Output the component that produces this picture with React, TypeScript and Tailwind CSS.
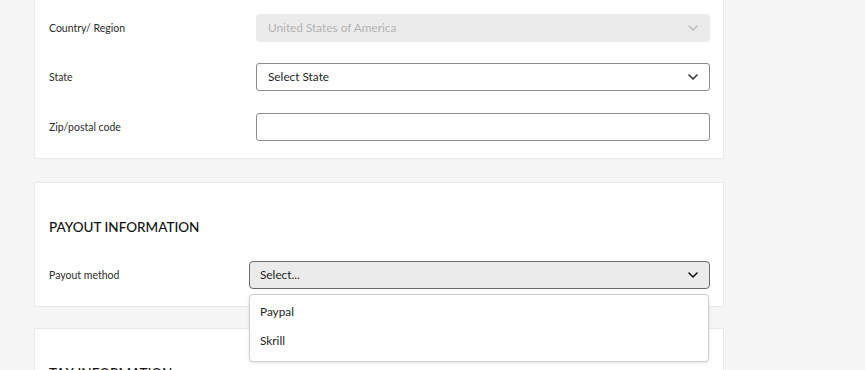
import { ReactNode } from "react";

const Chevron = ({ className }: { className: string }) => (
  <svg width="10" height="6" viewBox="0 0 10 6" className={className} fill="none">
    <path d="M1 1l4 4 4-4" stroke="currentColor" strokeWidth="1.6" strokeLinecap="round" strokeLinejoin="round" />
  </svg>
);

const Row = ({ label, labelW, children, className }: { label: string; labelW: string; children: ReactNode; className?: string }) => (
  <div className={`flex items-center h-[28px] ${className ?? ""}`}>
    <div className={`${labelW} shrink-0 pt-[1px] text-[10.5px] text-[#2c2c2c]`}>{label}</div>
    {children}
  </div>
);

const App = () => {
  return (
    <div className="min-h-[370px] h-[370px] overflow-hidden bg-[#f5f5f5] pl-[34px] font-['Lato','Liberation_Sans',sans-serif]">
      {/* address card */}
      <div className="w-[690px] bg-white border border-t-0 border-[#e9e9e9] pt-[14px] pb-[17px] pl-[14px] pr-[13px]">
        <Row label="Country/ Region" labelW="w-[207px]">
          <div className="flex-1 h-[28px] rounded-[4px] bg-[#ebebeb] flex items-center justify-between pl-[12px] pr-[12px] text-[11.8px] text-[#b3b3b3]">
            <span>United States of America</span>
            <Chevron className="text-[#bdbdbd]" />
          </div>
        </Row>
        <Row label="State" labelW="w-[207px]" className="mt-[21px]">
          <div className="flex-1 h-[28px] rounded-[3px] border border-[#8c8c8c] flex items-center justify-between pl-[11px] pr-[11px] text-[11.8px] text-[#1f1f1f]">
            <span>Select State</span>
            <Chevron className="text-[#333]" />
          </div>
        </Row>
        <Row label="Zip/postal code" labelW="w-[207px]" className="mt-[22px]">
          <div className="flex-1 h-[28px] rounded-[3px] border border-[#8c8c8c]" />
        </Row>
      </div>

      {/* payout card */}
      <div className="relative z-10 mt-[23px] w-[690px] bg-white border border-[#e9e9e9] pt-[37px] pb-[17px] pl-[14px] pr-[13px]">
        <h2 className="text-[13.5px] leading-[14px] font-medium text-[#111] uppercase">Payout information</h2>
        <Row label="Payout method" labelW="w-[200px]" className="mt-[27px]">
          <div className="relative flex-1">
            <div className="h-[28px] rounded-[4px] border border-[#6b6b6b] bg-[#ebebeb] flex items-center justify-between pl-[10px] pr-[11px] text-[11.8px] text-[#1f1f1f]">
              <span>Select...</span>
              <Chevron className="text-[#111]" />
            </div>
            <div className="absolute left-0 right-[1px] top-[33px] bg-white border border-[#cfcfcf] rounded-[4px] shadow-[0_1px_3px_rgba(0,0,0,0.12)] pt-[2px] pb-[6px] text-[11.8px] text-[#1f1f1f]">
              <div className="h-[29px] flex items-center pl-[10px]">Paypal</div>
              <div className="h-[29px] flex items-center pl-[10px]">Skrill</div>
            </div>
          </div>
        </Row>
      </div>

      {/* tax card */}
      <div className="mt-[21px] w-[690px] bg-white border border-[#e9e9e9] pt-[37px] pb-[17px] pl-[14px] pr-[13px]">
        <h2 className="text-[13.5px] leading-[14px] font-medium text-[#111] uppercase">Tax information</h2>
      </div>
    </div>
  );
};

export default App;
